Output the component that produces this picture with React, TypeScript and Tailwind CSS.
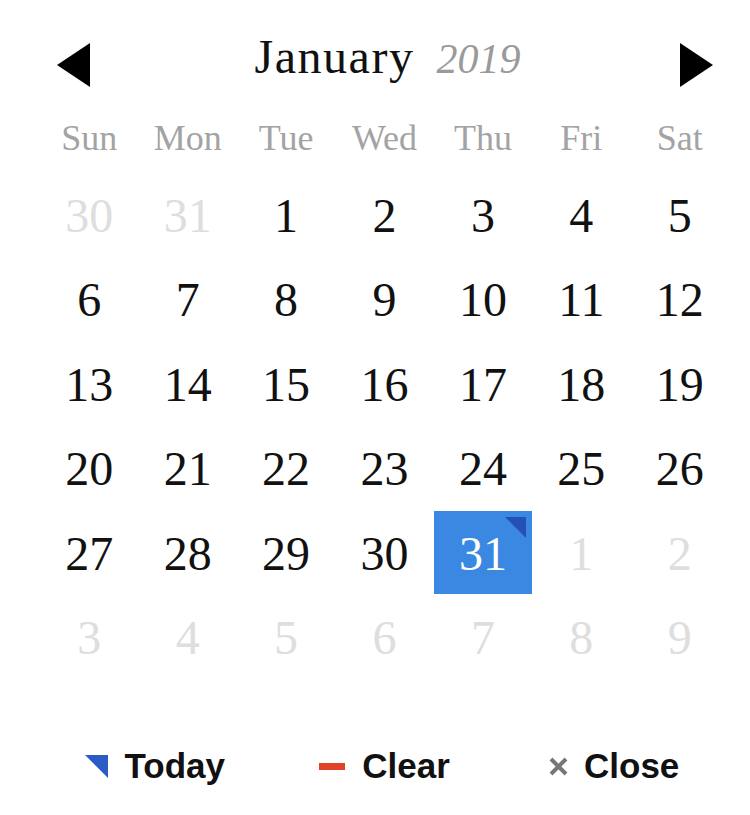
import React from "react";

const weekdays = ["Sun", "Mon", "Tue", "Wed", "Thu", "Fri", "Sat"];

type Day = { n: number; cur: boolean; sel?: boolean };

const days: Day[] = [
  { n: 30, cur: false },
  { n: 31, cur: false },
  ...Array.from({ length: 31 }, (_, i) => ({ n: i + 1, cur: true, sel: i === 30 })),
  ...Array.from({ length: 9 }, (_, i) => ({ n: i + 1, cur: false })),
];

export default function App() {
  return (
    <div className="w-[750px] h-[815px] bg-white overflow-hidden" style={{ fontFamily: '"Liberation Serif", "Times New Roman", serif' }}>
      <div className="ml-[40px] w-[689px]">
        {/* header */}
        <div className="relative h-[104px] flex items-center justify-center">
          <button className="absolute left-[17px] top-[43px] w-[33px] h-[44px]">
            <svg width="33" height="44" viewBox="0 0 33 44">
              <polygon points="33,0 33,44 0,22" fill="#000" />
            </svg>
          </button>
          <div className="flex items-baseline gap-[22px] mt-[9px] ml-[6px]">
            <span className="text-[48px] text-[#111] leading-none tracking-[1.5px]">January</span>
            <span className="text-[42px] italic text-[#9a9a9a] leading-none">2019</span>
          </div>
          <button className="absolute left-[640px] top-[43px] w-[33px] h-[44px]">
            <svg width="33" height="44" viewBox="0 0 33 44">
              <polygon points="0,0 0,44 33,22" fill="#000" />
            </svg>
          </button>
        </div>
        {/* weekdays */}
        <div className="grid grid-cols-7 h-[68px] items-center">
          {weekdays.map((w) => (
            <div key={w} className="text-center text-[36px] text-[#a3a3a3] leading-none">
              {w}
            </div>
          ))}
        </div>
        {/* days */}
        <div className="grid grid-cols-7">
          {days.map((d, i) => (
            <div key={i} className="h-[84.5px] flex items-center justify-center pt-[3px]">
              {d.sel ? (
                <div className="relative w-[100px] h-[83px] -mt-[3px] bg-[#3b88e2] flex items-center justify-center pt-[3px]">
                  <span className="text-[48px] text-white leading-none">{d.n}</span>
                  <svg className="absolute right-[6px] top-[6px]" width="21" height="21" viewBox="0 0 21 21">
                    <polygon points="0,0 21,0 21,21" fill="#2550b4" />
                  </svg>
                </div>
              ) : (
                <span className={`text-[48px] leading-none ${d.cur ? "text-[#111]" : "text-[#dedede]"}`}>{d.n}</span>
              )}
            </div>
          ))}
        </div>
        {/* footer */}
        <div
          className="grid grid-cols-3 mt-[61px] font-bold text-[35px] text-[#111]"
          style={{ fontFamily: '"Liberation Sans", Arial, sans-serif' }}
        >
          <div className="flex items-center justify-center gap-[17px]">
            <svg width="23" height="23" viewBox="0 0 23 23">
              <polygon points="0,0 23,0 23,23" fill="#2a5cc6" />
            </svg>
            <span>Today</span>
          </div>
          <div className="flex items-center justify-center gap-[17px]">
            <svg width="26" height="7" viewBox="0 0 26 7">
              <rect x="0" y="0" width="26" height="7" fill="#e0422a" />
            </svg>
            <span>Clear</span>
          </div>
          <div className="flex items-center justify-center gap-[16px]">
            <svg width="19" height="19" viewBox="0 0 19 19">
              <path d="M2 2 L17 17 M17 2 L2 17" stroke="#777" strokeWidth="4" strokeLinecap="butt" />
            </svg>
            <span>Close</span>
          </div>
        </div>
      </div>
    </div>
  );
}
